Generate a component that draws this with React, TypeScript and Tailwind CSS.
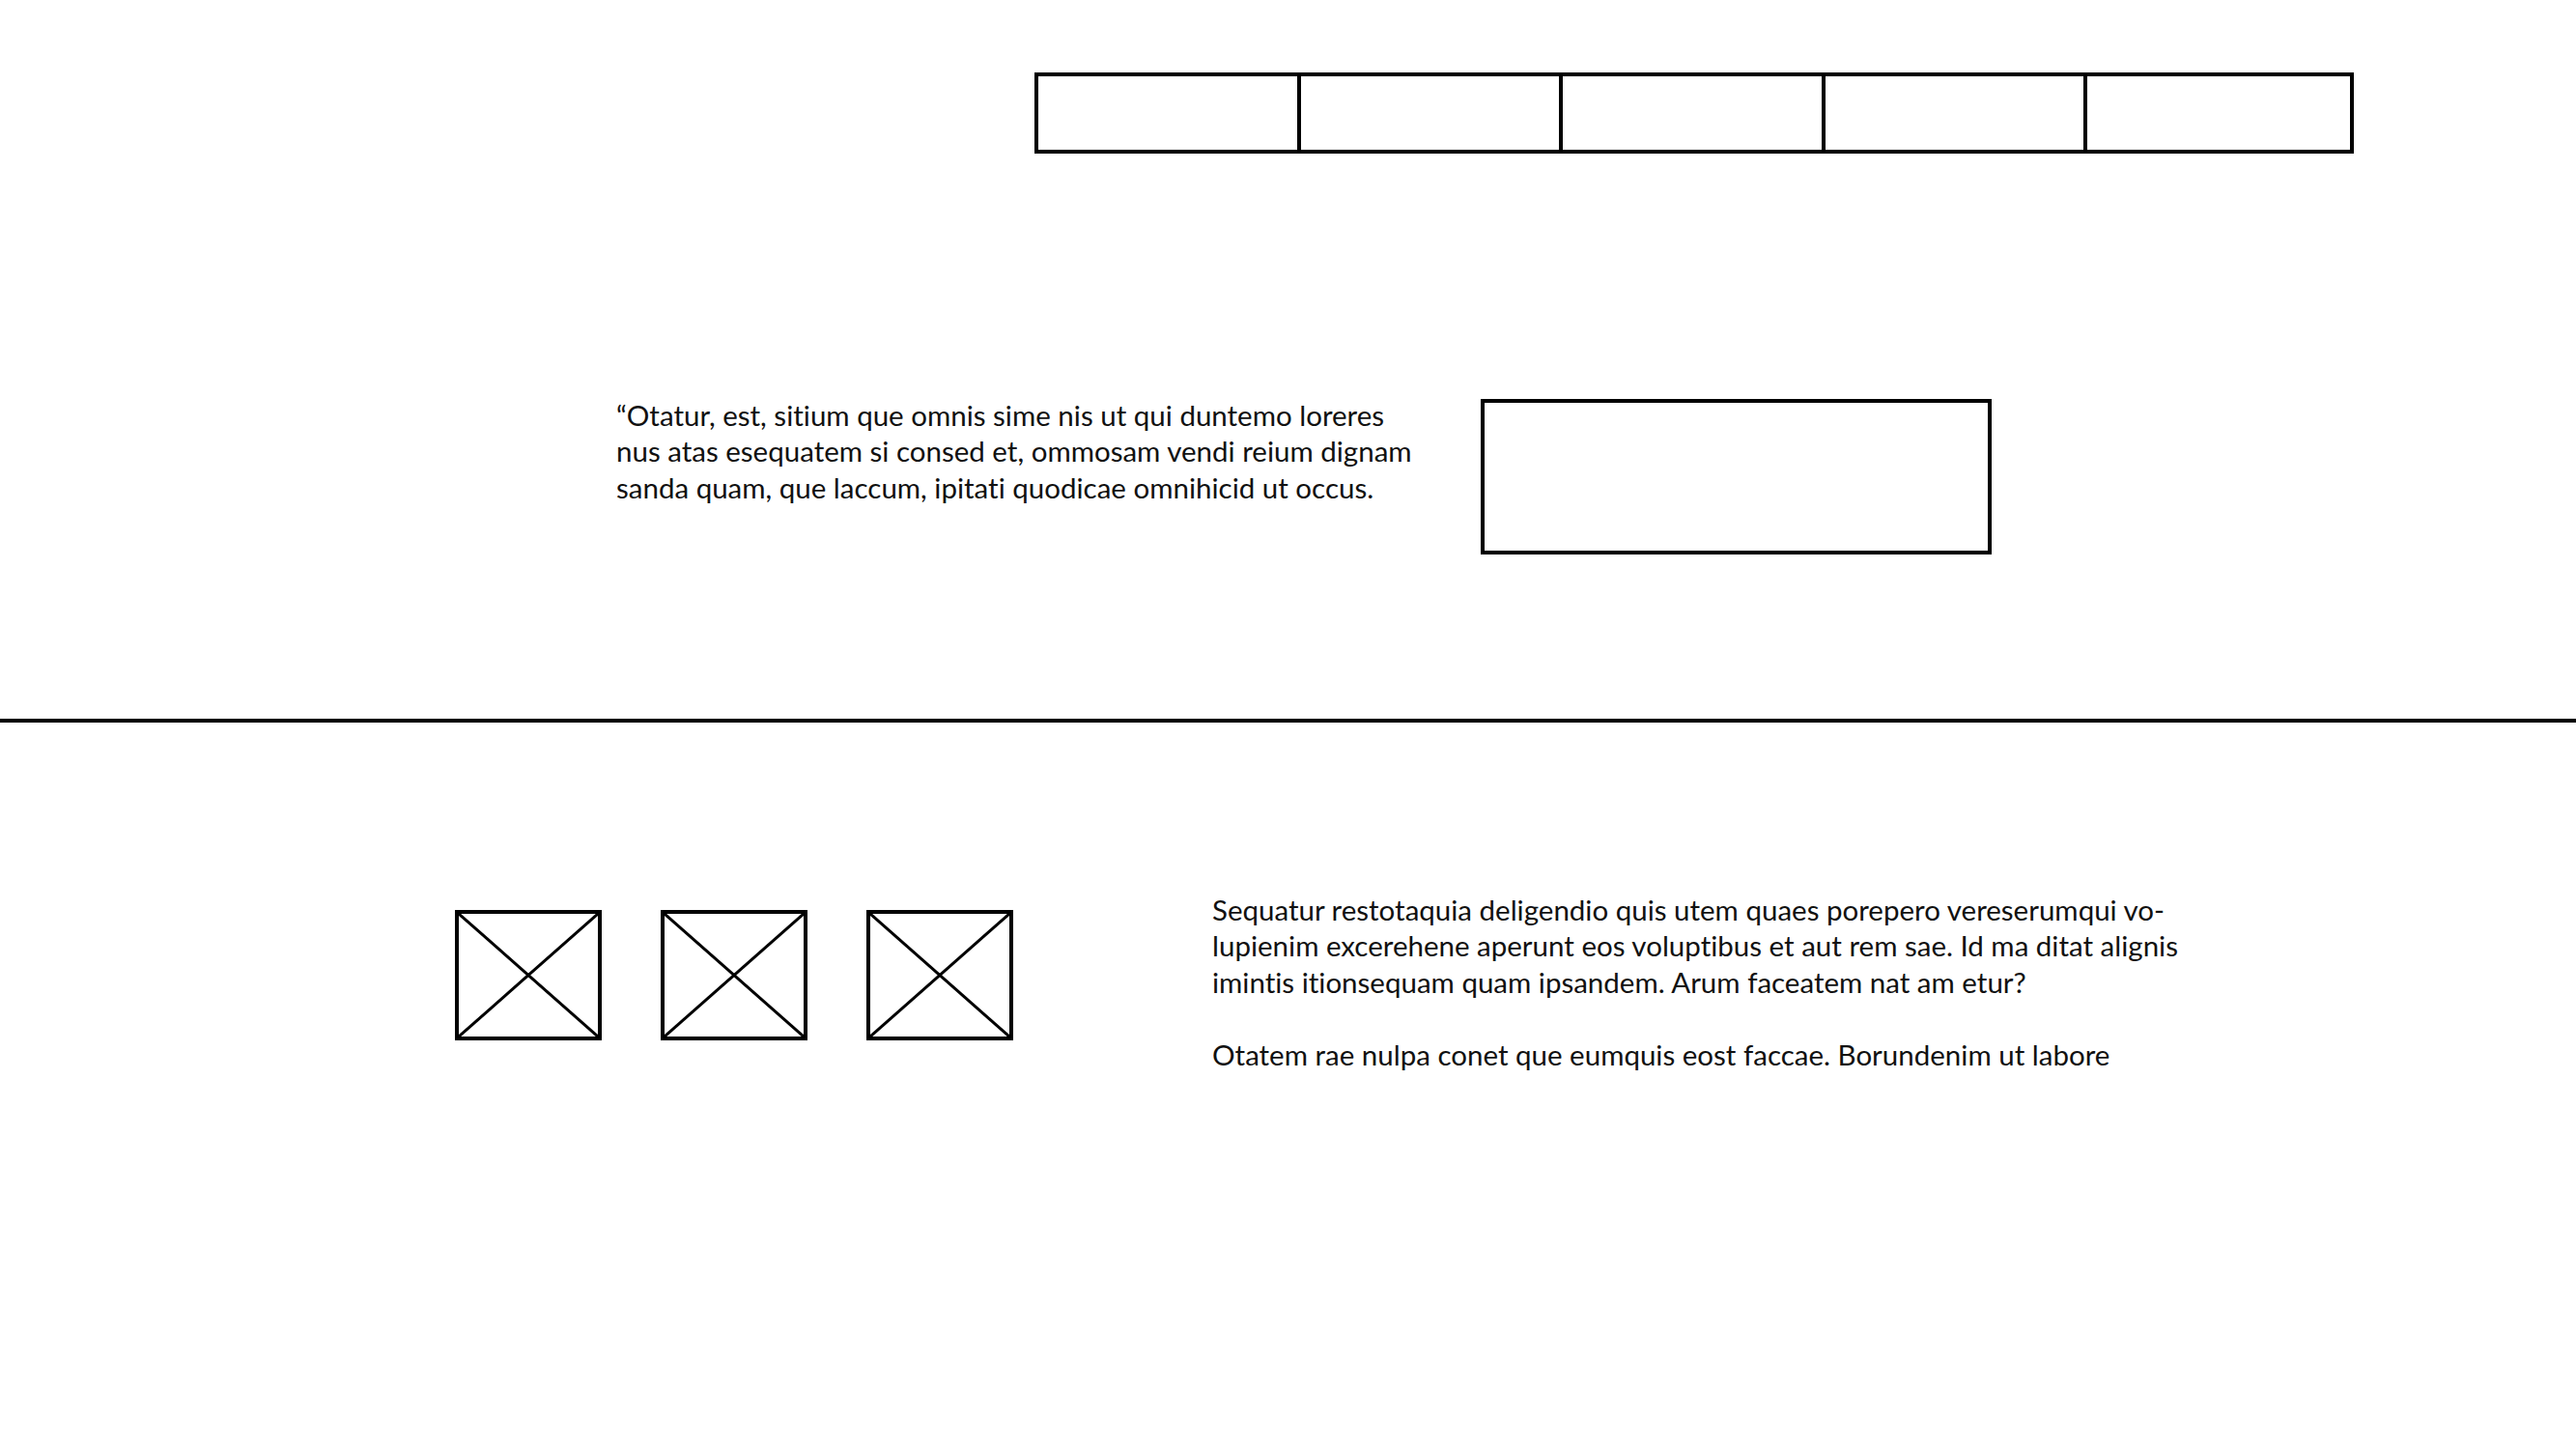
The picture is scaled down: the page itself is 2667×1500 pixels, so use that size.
export default function App() {
  const quote = [
    "“Otatur, est, sitium que omnis sime nis ut qui duntemo loreres",
    "nus atas esequatem si consed et, ommosam vendi reium dignam",
    "sanda quam, que laccum, ipitati quodicae omnihicid ut occus.",
  ];
  const body = [
    "Sequatur restotaquia deligendio quis utem quaes porepero vereserumqui vo-",
    "lupienim excerehene aperunt eos voluptibus et aut rem sae. Id ma ditat alignis",
    "imintis itionsequam quam ipsandem. Arum faceatem nat am etur?",
  ];

  return (
    <div className="w-[2667px] h-[1500px] bg-white text-[#111] font-['Lato',sans-serif] [font-variant-ligatures:none] overflow-hidden">
      {/* nav tabs */}
      <div className="pt-[75px] pl-[1071px]">
        <div className="grid grid-cols-5 w-[1366px] h-[84px] border-4 border-black divide-x-4 divide-black">
          <div />
          <div />
          <div />
          <div />
          <div />
        </div>
      </div>

      {/* quote row */}
      <div className="flex items-start mt-[252px] pl-[638px]">
        <p className="w-[895px] text-[29.5px] leading-[37.4px] whitespace-nowrap">
          {quote.map((l) => (
            <span key={l} className="block">
              {l}
            </span>
          ))}
        </p>
        <div className="mt-[2px] w-[529px] h-[161px] border-4 border-black" />
      </div>

      <div className="mt-[170px] h-[4px] bg-black" />

      {/* gallery + copy */}
      <div className="flex items-start mt-[175px] pl-[471px]">
        <div className="flex gap-[61px] mt-[19px]">
          {[0, 1, 2].map((i) => (
            <div key={i} className="w-[152px] h-[135px] border-4 border-black">
              <svg className="w-full h-full block" viewBox="0 0 100 100" preserveAspectRatio="none">
                <line x1="0" y1="0" x2="100" y2="100" stroke="black" strokeWidth="3" vectorEffect="non-scaling-stroke" />
                <line x1="100" y1="0" x2="0" y2="100" stroke="black" strokeWidth="3" vectorEffect="non-scaling-stroke" />
              </svg>
            </div>
          ))}
        </div>
        <div className="ml-[206px] text-[29.5px] leading-[37.4px] whitespace-nowrap">
          {body.map((l) => (
            <span key={l} className="block">
              {l}
            </span>
          ))}
          <span className="block mt-[37.4px]">Otatem rae nulpa conet que eumquis eost faccae. Borundenim ut labore</span>
        </div>
      </div>
    </div>
  );
}
